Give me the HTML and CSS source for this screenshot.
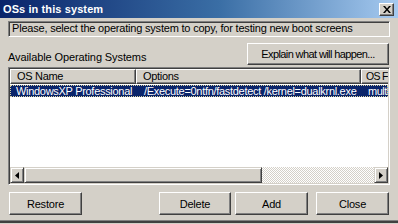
FILE: index.html
```html
<!DOCTYPE html>
<html>
<head>
<meta charset="utf-8">
<link rel="stylesheet" href="styles.css">
</head>
<body>
<div class="window">
  <div class="titlebar">
    <span class="title">OSs in this system</span>
    <span class="tclose"><svg width="8" height="7" viewBox="0 0 8 7"><path d="M0 0h2l2 2.5L6 0h2L5 3.5 8 7H6L4 4.5 2 7H0l3-3.5z" fill="#000"/></svg></span>
  </div>
  <div class="content">
    <div class="prompt">Please, select the operating system to copy, for testing new boot screens</div>
    <div class="labelrow">
      <span class="label">Available Operating Systems</span>
      <button class="btn explain">Explain what will happen...</button>
    </div>
    <div class="listview">
      <div class="lvinner">
        <div class="header">
          <div class="hcol c1">OS Name</div>
          <div class="hcol c2">Options</div>
          <div class="hcol c3">OS F</div>
        </div>
        <div class="row selected">
          <div class="cell c1">WindowsXP Professional</div>
          <div class="cell c2">/Execute=0ntfn/fastdetect /kernel=dualkrnl.exe</div>
          <div class="cell c3">multi</div>
        </div>
        <div class="rows-empty"></div>
        <div class="hscroll">
          <div class="sbtn"><svg width="4" height="7" viewBox="0 0 4 7"><path d="M4 0v7L0 3.5z" fill="#000"/></svg></div>
          <div class="thumb"></div>
          <div class="track"></div>
          <div class="sbtn"><svg width="4" height="7" viewBox="0 0 4 7"><path d="M0 0v7l4-3.5z" fill="#000"/></svg></div>
        </div>
      </div>
    </div>
    <div class="buttons">
      <button class="btn b-restore">Restore</button>
      <button class="btn b-delete">Delete</button>
      <button class="btn b-add">Add</button>
      <button class="btn b-close">Close</button>
    </div>
  </div>
</div>
</body>
</html>
```

FILE: styles.css
```css
* { box-sizing: border-box; }
html, body { margin: 0; padding: 0; }
body {
  width: 398px;
  height: 224px;
  overflow: hidden;
  background: #d4d0c8;
  font-family: "Liberation Sans", Arial, sans-serif;
  font-size: 11px;
  color: #000;
}
.window {
  width: 398px;
  height: 223px;
  display: flex;
  flex-direction: column;
  border-bottom: 2px solid #404040;
  box-shadow: inset 0 -1px 0 #808080;
}
.titlebar {
  height: 18px;
  display: flex;
  align-items: center;
  padding-left: 3px;
  padding-right: 4px;
  background: linear-gradient(90deg, #0a246a 0%, #3a6ea5 55%, #a6caf0 100%);
}
.title {
  color: #fff;
  font-weight: bold;
  font-size: 11px;
  letter-spacing: 0.1px;
}
.tclose {
  margin-left: auto;
  width: 15px;
  height: 13px;
  background: #d4d0c8;
  display: flex;
  align-items: center;
  justify-content: center;
  border-top: 1px solid #fff;
  border-left: 1px solid #fff;
  border-right: 1px solid #404040;
  border-bottom: 1px solid #404040;
  box-shadow: inset -1px -1px 0 #808080;
}
.content {
  padding: 3px 8px 0 8px;
  display: flex;
  flex-direction: column;
}
.prompt {
  height: 16px;
  width: 382px;
  padding-left: 3px;
  line-height: 13px;
  border-top: 1px solid #808080;
  border-left: 1px solid #808080;
  border-right: 1px solid #fff;
  border-bottom: 1px solid #fff;
  box-shadow: inset 1px 1px 0 #404040, inset -1px -1px 0 #d4d0c8;
  white-space: nowrap;
  overflow: hidden;
  letter-spacing: -0.2px;
}
.labelrow {
  display: flex;
  align-items: flex-end;
  margin-top: 6px;
  height: 22px;
}
.label {
  letter-spacing: -0.1px;
  line-height: 12px;
  padding-bottom: 2px;
}
.btn {
  font-family: "Liberation Sans", Arial, sans-serif;
  font-size: 11px;
  color: #000;
  background: #d4d0c8;
  padding: 0;
  margin: 0;
  border-top: 1px solid #fff;
  border-left: 1px solid #fff;
  border-right: 1px solid #404040;
  border-bottom: 1px solid #404040;
  box-shadow: inset -1px -1px 0 #808080;
  letter-spacing: -0.2px;
}
.explain {
  margin-left: auto;
  margin-right: 1px;
  width: 142px;
  height: 22px;
  letter-spacing: -0.6px;
}
.listview {
  margin-top: 2px;
  width: 382px;
  height: 118px;
  border-top: 1px solid #808080;
  border-left: 1px solid #808080;
  border-right: 1px solid #fff;
  border-bottom: 1px solid #fff;
  box-shadow: inset 1px 1px 0 #404040, inset -1px -1px 0 #d4d0c8;
  padding: 1px;
}
.lvinner {
  height: 100%;
  background: #fff;
  display: flex;
  flex-direction: column;
  overflow: hidden;
}
.header {
  display: flex;
  height: 15px;
  flex: none;
}
.hcol {
  height: 15px;
  line-height: 12px;
  padding-left: 6px;
  background: #d4d0c8;
  border-top: 1px solid #fff;
  border-left: 1px solid #fff;
  border-right: 1px solid #404040;
  border-bottom: 1px solid #404040;
  box-shadow: inset -1px -1px 0 #808080;
  white-space: nowrap;
  overflow: hidden;
  letter-spacing: -0.3px;
  flex: none;
}
.c1 { width: 126px; }
.c2 { width: 225px; }
.hcol.c3 {
  width: 27px;
  padding-left: 4px;
  font-size: 10.5px;
  letter-spacing: -0.7px;
  border-right: 0;
  box-shadow: inset 0 -1px 0 #808080;
}
.row {
  display: flex;
  height: 12px;
  margin-top: 1px;
  flex: none;
  width: 378px;
}
.row.selected {
  background: #0a246a;
  color: #fff;
  outline: 1px dotted #d8d0a0;
  outline-offset: -1px;
}
.cell {
  flex: none;
  line-height: 12px;
  white-space: nowrap;
  overflow: hidden;
  letter-spacing: -0.3px;
}
.cell.c1 { padding-left: 6px; }
.cell.c2 { padding-left: 8px; }
.cell.c3 { padding-left: 7px; width: 27px; letter-spacing: -0.5px; }
.rows-empty { flex: 1; }
.hscroll {
  flex: none;
  height: 16px;
  display: flex;
}
.sbtn {
  width: 14px;
  height: 16px;
  flex: none;
  display: flex;
  align-items: center;
  justify-content: center;
  background: #d4d0c8;
  border-top: 1px solid #d4d0c8;
  border-left: 1px solid #d4d0c8;
  border-right: 1px solid #404040;
  border-bottom: 1px solid #404040;
  box-shadow: inset 1px 1px 0 #fff, inset -1px -1px 0 #808080;
}
.thumb {
  width: 238px;
  flex: none;
  background: #d4d0c8;
  border-top: 1px solid #d4d0c8;
  border-left: 1px solid #d4d0c8;
  border-right: 1px solid #404040;
  border-bottom: 1px solid #404040;
  box-shadow: inset 1px 1px 0 #fff, inset -1px -1px 0 #808080;
}
.track {
  flex: 1;
  background-color: #fff;
  background-image: conic-gradient(#d4d0c8 25%, #fff 0 50%, #d4d0c8 0 75%, #fff 0);
  background-size: 2px 2px;
}
.buttons {
  display: flex;
  margin-top: 7px;
  padding-left: 1px;
}
.buttons .btn {
  height: 23px;
  width: 73px;
}
.b-delete { margin-left: auto; width: 72px !important; }
.b-add { margin-left: 4px; }
.b-close { margin-left: 8px; margin-right: 1px; }
```
